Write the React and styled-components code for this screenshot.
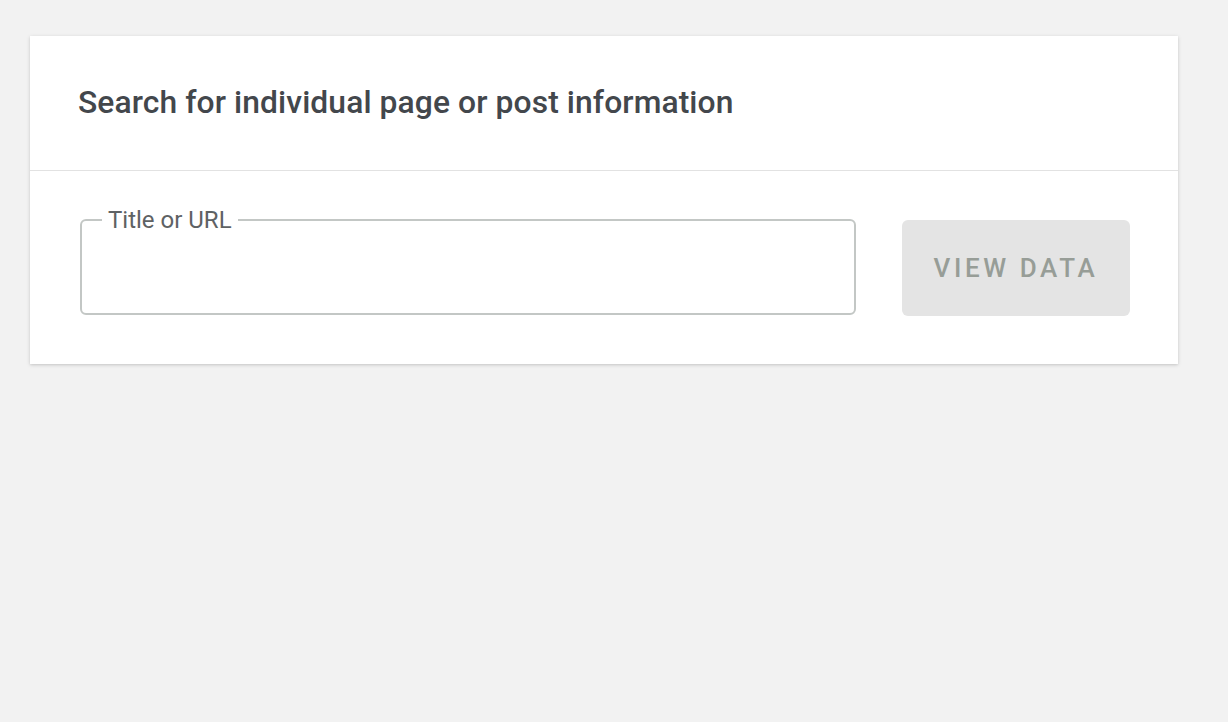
import React from "react";
import styled, { createGlobalStyle } from "styled-components";

const Global = createGlobalStyle`
  html, body { margin: 0; padding: 0; background: #f2f2f2; }
  body { font-family: Roboto, "Liberation Sans", sans-serif; }
  #root { min-height: 722px; padding: 36px 50px 0 30px; box-sizing: border-box; }
`;

const Card = styled.section`
  width: 1148px;
  background: #ffffff;
  box-shadow: 0 1px 4px rgba(0, 0, 0, 0.14), 0 1px 2px rgba(0, 0, 0, 0.06);
`;

const Header = styled.header`
  height: 135px;
  box-sizing: border-box;
  display: flex;
  align-items: center;
  padding: 0 48px 3px 48px;
  border-bottom: 1px solid #e2e2e2;
`;

const Title = styled.h2`
  margin: 0;
  font-size: 31.8px;
  font-weight: 500;
  color: #43474c;
  letter-spacing: 0.1px;
`;

const Body = styled.div`
  display: flex;
  align-items: flex-start;
  gap: 46px;
  padding: 35px 48px 48px 50px;
`;

const Field = styled.fieldset`
  margin: 0;
  flex: 0 0 776px;
  height: 109px;
  box-sizing: border-box;
  border: 2px solid #c3c7c5;
  border-radius: 6px;
  padding: 0 20px;
`;

const Legend = styled.legend`
  padding: 0 6px;
  font-size: 24px;
  color: #5e6264;
  line-height: 28px;
`;

const Input = styled.input`
  border: none;
  outline: none;
  width: 100%;
  height: 60px;
  font-size: 22px;
  font-family: inherit;
  background: transparent;
`;

const Button = styled.button`
  flex: 0 0 228px;
  height: 96px;
  margin-top: 14px;
  border: none;
  border-radius: 6px;
  background: #e4e4e4;
  color: #979d97;
  font-family: Roboto, "Liberation Sans", sans-serif;
  font-size: 26px;
  font-weight: 500;
  letter-spacing: 3.6px;
  text-transform: uppercase;
  cursor: default;
`;

export default function App() {
  return (
    <>
      <Global />
      <Card>
        <Header>
          <Title>Search for individual page or post information</Title>
        </Header>
        <Body>
          <Field>
            <Legend>Title or URL</Legend>
            <Input type="text" />
          </Field>
          <Button disabled>View Data</Button>
        </Body>
      </Card>
    </>
  );
}
